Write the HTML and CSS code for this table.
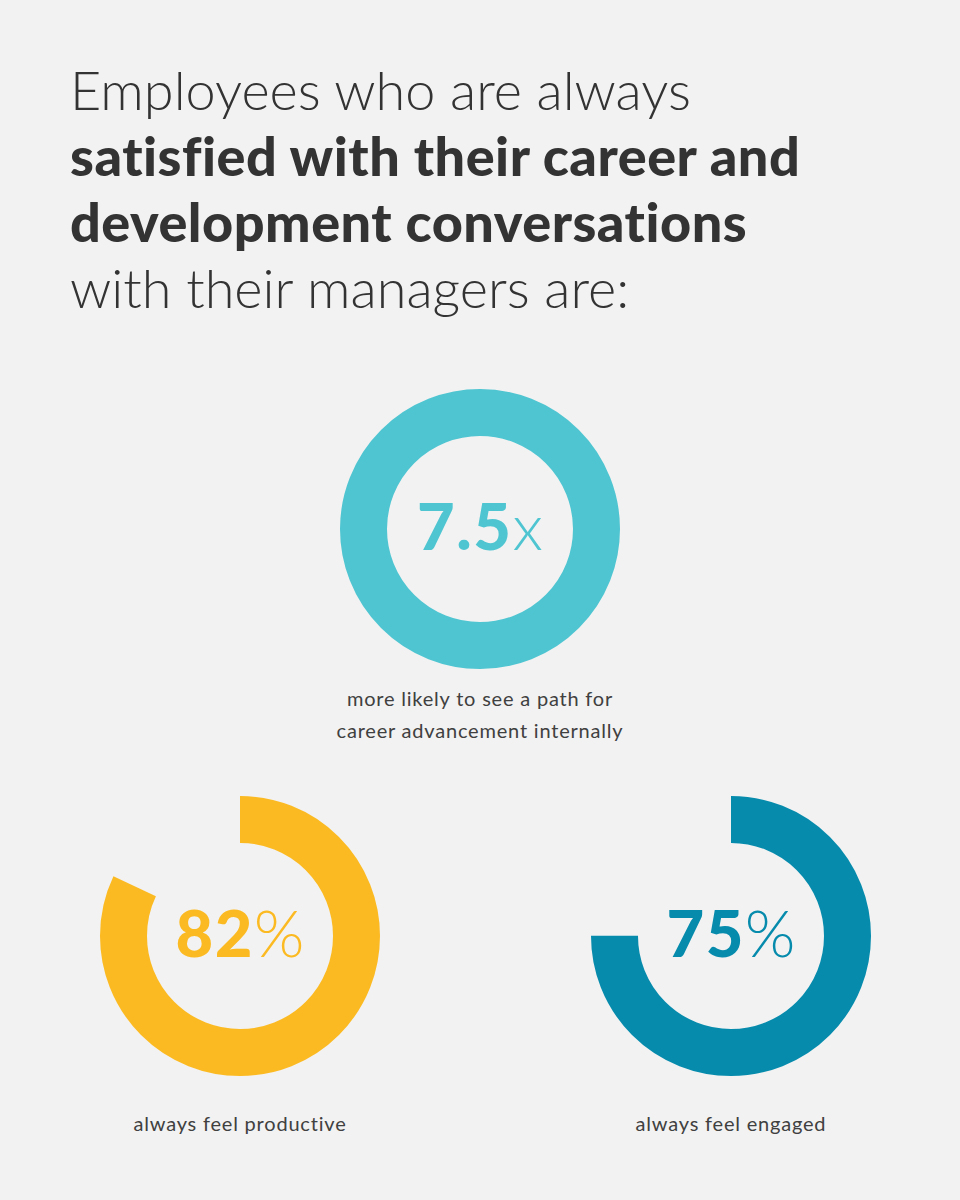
FILE: index.html
```html
<!DOCTYPE html>
<html>
<head>
<meta charset="utf-8">
<link rel="stylesheet" href="styles.css">
</head>
<body>
<main class="page">
  <h1 class="headline">
    <span class="light">Employees who are always</span>
    <strong>satisfied with their career and</strong>
    <strong>development conversations</strong>
    <span class="light">with their managers are:</span>
  </h1>

  <section class="stat stat-top">
    <div class="donut">
      <svg viewBox="0 0 280 280" width="280" height="280">
        <circle cx="140" cy="140" r="116.5" fill="none" stroke="#4fc5d1" stroke-width="47"/>
      </svg>
      <div class="value teal"><b>7.5</b><span>x</span></div>
    </div>
    <p class="caption">more likely to see a path for<br>career advancement internally</p>
  </section>

  <section class="row">
    <div class="stat">
      <div class="donut">
        <svg viewBox="0 0 280 280" width="280" height="280">
          <circle cx="140" cy="140" r="116.5" fill="none" stroke="#fcba22" stroke-width="47" stroke-dasharray="600.2 800" transform="rotate(-90 140 140)"/>
        </svg>
        <div class="value yellow"><b>82</b><span>%</span></div>
      </div>
      <p class="caption low">always feel productive</p>
    </div>
    <div class="stat">
      <div class="donut">
        <svg viewBox="0 0 280 280" width="280" height="280">
          <circle cx="140" cy="140" r="116.5" fill="none" stroke="#068bad" stroke-width="47" stroke-dasharray="549 800" transform="rotate(-90 140 140)"/>
        </svg>
        <div class="value blue"><b>75</b><span>%</span></div>
      </div>
      <p class="caption low">always feel engaged</p>
    </div>
  </section>
</main>
</body>
</html>
```

FILE: styles.css
```css
html, body {
  margin: 0;
  padding: 0;
  background: #f2f2f2;
}

.page {
  width: 960px;
  height: 1200px;
  box-sizing: border-box;
  padding-top: 57px;
  font-family: Lato, "Open Sans", sans-serif;
  color: #333333;
  display: flex;
  flex-direction: column;
}

.headline {
  margin: 0;
  padding-left: 70px;
  font-size: 54px;
  line-height: 66px;
  font-weight: 400;
  display: flex;
  flex-direction: column;
  color: #333333;
}

.headline .light {
  font-weight: 300;
}

.headline strong {
  font-weight: 900;
  letter-spacing: 0.5px;
}

.stat {
  display: flex;
  flex-direction: column;
  align-items: center;
  width: 280px;
}

.stat-top {
  align-self: center;
  width: 320px;
  margin-top: 68px;
}

.donut {
  display: grid;
  width: 280px;
  height: 280px;
}

.donut > * {
  grid-area: 1 / 1;
}

.donut svg {
  display: block;
}

.value {
  align-self: center;
  justify-self: center;
  font-size: 65px;
  line-height: 1;
  margin-top: -8px;
  letter-spacing: 1.5px;
}

.value b {
  font-weight: 900;
}

.value span {
  font-weight: 300;
  letter-spacing: 0;
}

.teal { color: #4fc5d1; }
.yellow { color: #fcba22; }
.blue { color: #068bad; }

.caption {
  margin: 13px 0 0;
  font-size: 20px;
  line-height: 32px;
  letter-spacing: 0.8px;
  text-align: center;
  color: #404040;
  white-space: nowrap;
}

.caption.low {
  margin-top: 31px;
}

.row {
  display: flex;
  gap: 211px;
  padding-left: 100px;
  margin-top: 50px;
}
```
